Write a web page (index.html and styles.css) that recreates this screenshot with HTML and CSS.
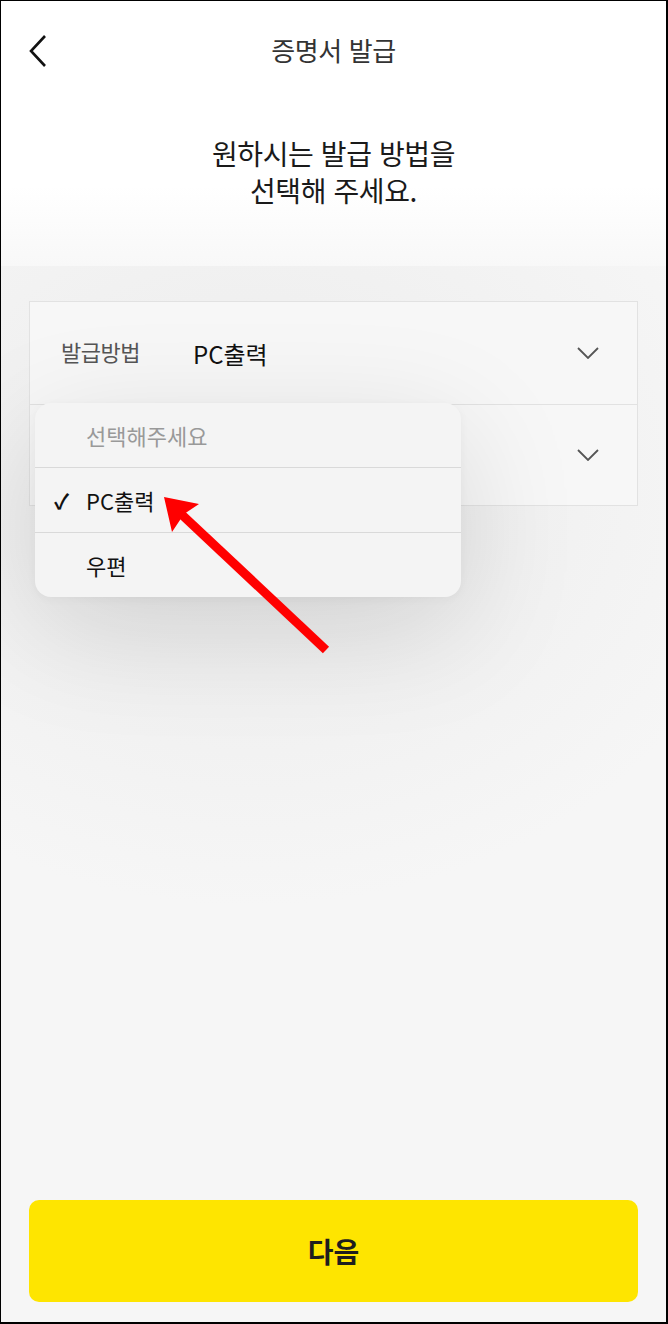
FILE: index.html
```html
<!DOCTYPE html>
<html lang="ko">
<head>
<meta charset="utf-8">
<link rel="stylesheet" href="styles.css">
</head>
<body>
<div class="app">
  <div class="top">
    <header class="header">
      <svg class="back" width="22" height="34" viewBox="0 0 22 34"><path d="M18 2 L4 17 L18 32" fill="none" stroke="#111" stroke-width="2.6"/></svg>
      <h1 class="title">증명서 발급</h1>
    </header>
    <p class="heading">원하시는 발급 방법을<br>선택해 주세요.</p>
  </div>
  <main class="main">
    <div class="card">
      <div class="row">
        <span class="label">발급방법</span>
        <span class="value">PC출력</span>
        <svg class="chev" width="22" height="12" viewBox="0 0 22 12"><path d="M1 1 L11 11 L21 1" fill="none" stroke="#555" stroke-width="1.8"/></svg>
      </div>
      <div class="row row2">
        <span class="label"></span>
        <span class="value"></span>
        <svg class="chev" width="22" height="12" viewBox="0 0 22 12"><path d="M1 1 L11 11 L21 1" fill="none" stroke="#555" stroke-width="1.8"/></svg>
      </div>
      <ul class="menu">
        <li class="opt placeholder"><span class="check"></span>선택해주세요</li>
        <li class="opt"><span class="check">✓</span>PC출력</li>
        <li class="opt"><span class="check"></span>우편</li>
      </ul>
    </div>
    <div class="spacer"></div>
    <button class="next">다음</button>
  </main>
  <svg class="arrow" width="200" height="190" viewBox="0 0 200 190">
    <line x1="175" y1="168" x2="28" y2="30" stroke="#f00" stroke-width="9"/>
    <polygon points="13,15 48,22 33,32 21,50" fill="#f00"/>
  </svg>
</div>
</body>
</html>
```
FILE: styles.css
```css
* { box-sizing: border-box; margin: 0; padding: 0; }
html, body { width: 668px; height: 1324px; }
body {
  font-family: "Noto Sans CJK KR", "Noto Sans", sans-serif;
  background: #f7f7f7;
  border-top: 1px solid #000;
  border-left: 1px solid #000;
  border-right: 2px solid #000;
  border-bottom: 2px solid #000;
  overflow: hidden;
}
.app { position: relative; height: 100%; display: flex; flex-direction: column; }
.top {
  height: 265px;
  background: linear-gradient(180deg, #fff 0, #fff 185px, #f8f8f8 265px);
  flex: none;
}
.header {
  height: 97px;
  display: flex;
  align-items: center;
  justify-content: center;
  position: relative;
}
.back { position: absolute; left: 26px; top: 33px; }
.title { font-size: 26px; font-weight: 400; color: #333; letter-spacing: -0.4px; }
.heading {
  margin-top: 37px;
  text-align: center;
  font-size: 28px;
  line-height: 37px;
  color: #1a1a1a;
  letter-spacing: -0.4px;
}
.main {
  flex: 1;
  display: flex;
  flex-direction: column;
  padding: 35px 28px 20px 28px;
  background: radial-gradient(ellipse 520px 420px at 250px 220px, #ebebeb 0, #f0f0f0 45%, #f6f6f6 100%);
}
.card {
  position: relative;
  border: 1px solid #e2e2e2;
  background: #f7f7f7;
}
.row {
  height: 102px;
  display: flex;
  align-items: center;
  padding: 0 38px 0 31px;
}
.row2 { border-top: 1px solid #e2e2e2; height: 101px; }
.label { width: 132px; font-size: 22px; color: #555; margin-top: -4px; letter-spacing: -0.5px; }
.value { flex: 1; font-size: 24px; color: #111; }
.chev { flex: none; }
.menu {
  position: absolute;
  left: 5px;
  top: 101px;
  width: 426px;
  list-style: none;
  background: #f4f4f4;
  border-radius: 16px;
  box-shadow: 0 30px 120px rgba(0,0,0,0.13), 0 2px 10px rgba(0,0,0,0.04);
  overflow: hidden;
}
.opt {
  height: 65px;
  display: flex;
  align-items: center;
  font-size: 22px;
  color: #111;
  border-top: 1px solid #d9d9d9;
}
.opt:first-child { border-top: none; height: 64px; }
.placeholder { color: #999; }
.check { width: 51px; padding-left: 19px; font-size: 21px; font-weight: 700; color: #111; }
.spacer { flex: 1; }
.next {
  height: 102px;
  border: none;
  border-radius: 10px;
  background: #fee500;
  font-family: "Noto Sans CJK KR", sans-serif;
  font-size: 28px;
  font-weight: 700;
  color: #1e1e1e;
}
.arrow { position: absolute; left: 150px; top: 481px; }
```
